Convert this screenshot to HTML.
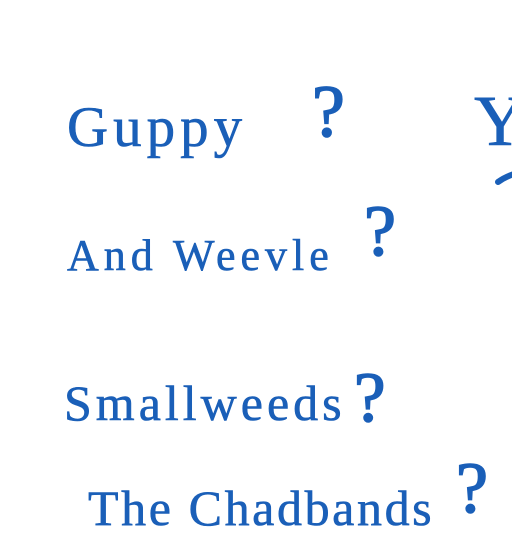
<!DOCTYPE html>
<html><head><style>
html,body{margin:0;padding:0;background:#fff;width:512px;height:512px;overflow:hidden}
div{position:absolute;font-family:"Liberation Serif",serif;color:#1a5fb8;line-height:1;white-space:nowrap;-webkit-text-stroke:0.6px #1a5fb8}
.q{-webkit-text-stroke:1.6px #1a5fb8}
</style></head><body>
<div style="left:67px;top:99px;font-size:57px;letter-spacing:5px">Guppy</div>
<div style="left:67px;top:234px;font-size:44px;letter-spacing:5px">And Weevle</div>
<div style="left:64px;top:378px;font-size:50px;letter-spacing:4px">Smallweeds</div>
<div style="left:88px;top:483px;font-size:50px;letter-spacing:2.6px">The Chadbands</div>
<div class="q" style="left:312px;top:75px;font-size:74px">?</div>
<div class="q" style="left:364px;top:195px;font-size:72px">?</div>
<div class="q" style="left:354px;top:363px;font-size:71px">?</div>
<div class="q" style="left:456px;top:452px;font-size:72px">?</div>
<div style="left:474px;top:85px;font-size:72px">Y</div>
<svg style="position:absolute;left:0;top:0" width="512" height="512"><path d="M498 182 Q505 177 514 174" stroke="#1a5fb8" stroke-width="6" stroke-linecap="round" fill="none"/></svg>
</body></html>
